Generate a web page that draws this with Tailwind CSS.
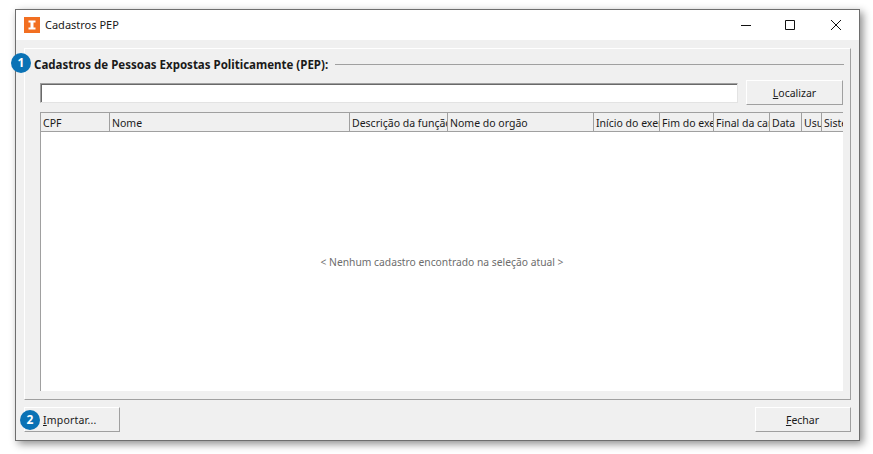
<!DOCTYPE html>
<html lang="pt">
  <head>
    <meta charset="UTF-8" />
    <title>Cadastros PEP</title>
    <script src="https://cdn.jsdelivr.net/npm/@tailwindcss/browser@4"></script>
  </head>
  <body class="w-[873px] h-[454px] overflow-hidden bg-white font-['Noto_Sans','Liberation_Sans',sans-serif] text-[10.5px] text-[#1a1a1a]">
    <div class="pt-[9px] pl-[15px]">
      <!-- janela -->
      <div class="relative w-[845px] h-[432px] border border-[#6e6e6e] bg-[#f0f0f0] shadow-[3px_3px_8px_rgba(0,0,0,0.45)] flex flex-col">
        <!-- barra de titulo -->
        <div class="h-[30px] shrink-0 bg-white flex items-center pl-[8px]">
          <svg width="16" height="16" viewBox="0 0 16 16"><rect width="16" height="16" fill="#f26f21"/><path d="M4.5 3.5h7v2h-2v5h2v2h-7v-2h2v-5h-2z" fill="#fff"/></svg>
          <span class="ml-[5px] text-[11px]">Cadastros PEP</span>
          <div class="ml-auto flex h-full">
            <div class="w-[45px] flex items-center justify-center">
              <svg width="10" height="10" viewBox="0 0 10 10"><path d="M0 5.5h10" stroke="#111" fill="none"/></svg>
            </div>
            <div class="w-[45px] pr-[1px] flex items-center justify-center">
              <svg width="10" height="10" viewBox="0 0 10 10"><path d="M.5.5h9v9h-9z" stroke="#111" fill="none"/></svg>
            </div>
            <div class="w-[46px] flex items-center justify-center">
              <svg width="10" height="10" viewBox="0 0 10 10"><path d="M0 0l10 10M10 0L0 10" stroke="#111" fill="none"/></svg>
            </div>
          </div>
        </div>

        <!-- painel -->
        <div class="mt-[8px] ml-[8px] w-[827px] h-[352px] border border-t-white border-l-white border-r-[#a0a0a0] border-b-[#a0a0a0] pl-[9px] pr-[6px] pt-[7px] flex flex-col">
          <div class="flex items-center h-[18px]">
            <span class="font-bold text-[11.5px] whitespace-nowrap">Cadastros de Pessoas Expostas Politicamente (PEP):</span>
            <div class="flex-1 ml-[7px] mb-[2px] h-px bg-[#a0a0a0]"></div>
          </div>
          <div class="flex ml-[6px] mt-[6px] items-start">
            <input class="w-[698px] h-[20px] mt-[3px] bg-white border border-t-[#a0a0a0] border-l-[#a0a0a0] border-r-[#e3e3e3] border-b-[#e3e3e3] shadow-[inset_1px_1px_0_#696969]" />
            <button class="ml-[8px] w-[97px] h-[25px] pt-[2px] bg-[#f0f0f0] border border-t-white border-l-white border-r-[#a0a0a0] border-b-[#a0a0a0] text-center"><span class="underline">L</span>ocalizar</button>
          </div>
          <!-- tabela -->
          <div class="ml-[6px] mt-[7px] w-[803px] h-[279px] border-l border-t border-[#a0a0a0] bg-white flex flex-col">
            <div class="h-[19px] shrink-0 flex bg-[#f0f0f0] border-b border-[#a0a0a0] items-center whitespace-nowrap">
              <div class="w-[69px] h-full pl-[2px] overflow-hidden border-r border-[#a0a0a0] leading-[20px]">CPF</div>
              <div class="w-[240px] h-full pl-[2px] overflow-hidden border-r border-[#a0a0a0] leading-[20px]">Nome</div>
              <div class="w-[98px] h-full pl-[2px] overflow-hidden border-r border-[#a0a0a0] leading-[20px]">Descrição da função</div>
              <div class="w-[146px] h-full pl-[2px] overflow-hidden border-r border-[#a0a0a0] leading-[20px]">Nome do orgão</div>
              <div class="w-[66px] h-full pl-[2px] overflow-hidden border-r border-[#a0a0a0] leading-[20px]">Início do exercício</div>
              <div class="w-[54px] h-full pl-[2px] overflow-hidden border-r border-[#a0a0a0] leading-[20px]">Fim do exercício</div>
              <div class="w-[56px] h-full pl-[2px] overflow-hidden border-r border-[#a0a0a0] leading-[20px]">Final da carência</div>
              <div class="w-[32px] h-full pl-[2px] overflow-hidden border-r border-[#a0a0a0] leading-[20px]">Data</div>
              <div class="w-[20px] h-full pl-[2px] overflow-hidden border-r border-[#a0a0a0] leading-[20px]">Usuário</div>
              <div class="flex-1 h-full pl-[2px] overflow-hidden leading-[20px]">Sistema</div>
            </div>
            <div class="flex-1 pt-[2px] flex items-center justify-center text-[#6d6d6d] text-[10.3px]">&lt; Nenhum cadastro encontrado na seleção atual &gt;</div>
          </div>
        </div>

        <!-- rodape -->
        <div class="flex justify-between pl-[8px] pr-[8px] mt-[7px]">
          <button class="w-[96px] h-[25px] pt-[2px] bg-[#f0f0f0] border border-t-white border-l-white border-r-[#a0a0a0] border-b-[#a0a0a0] text-left pl-[18px] tracking-[0.2px]"><span class="underline">I</span>mportar...</button>
          <button class="w-[96px] h-[25px] pt-[2px] pr-[1px] bg-[#f0f0f0] border border-t-white border-l-white border-r-[#a0a0a0] border-b-[#a0a0a0] text-center"><span class="underline">F</span>echar</button>
        </div>

        <!-- marcadores -->
        <div class="absolute left-[-5px] top-[43px] w-5 h-5 rounded-full bg-[#0a72b5] text-white font-bold text-[12px] flex items-center justify-center">1</div>
        <div class="absolute left-[4px] top-[400px] w-5 h-5 rounded-full bg-[#0a72b5] text-white font-bold text-[12px] flex items-center justify-center">2</div>
      </div>
    </div>
  </body>
</html>
